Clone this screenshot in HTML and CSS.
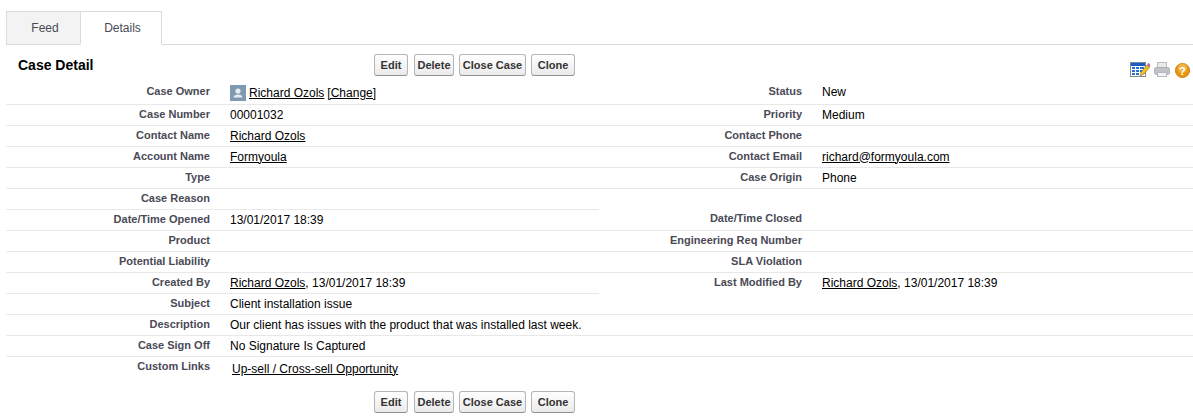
FILE: index.html
```html
<!DOCTYPE html>
<html lang="en">
<head>
<meta charset="utf-8">
<title>Case Detail</title>
<link rel="stylesheet" href="styles.css">
</head>
<body>
<div class="tabs">
  <div class="tab tab-feed">Feed</div>
  <div class="tab tab-active">Details</div>
</div>
<div class="head">
  <h2 class="title">Case Detail</h2>
  <div class="btns">
    <button class="btn">Edit</button><button class="btn">Delete</button><button class="btn">Close Case</button><button class="btn">Clone</button>
  </div>
  <div class="tools">
    <svg class="ico" width="20" height="16" viewBox="0 0 20 16"><rect x="0.5" y="0.5" width="15" height="14" fill="#fff" stroke="#7f8c98"/><rect x="1" y="1" width="14" height="3" fill="#1a5cc0"/><path d="M2 5h3v2H2zM6 5h3v2H6zM10 5h4v2h-4zM2 8h3v2H2zM6 8h3v2H6zM10 8h4v2h-4zM2 11h3v2H2zM6 11h3v2H6z" fill="#2a6fd6"/><path d="M10 14l1-4 6-7 3 2-6 7z" fill="#f2c21e" stroke="#7a5c10" stroke-width="0.5"/><path d="M17 3l1-2 2 1 0 3z" fill="#c862a8"/></svg>
    <svg class="ico" width="16" height="16" viewBox="0 0 16 16"><rect x="3.500" y="0.500" width="9" height="6" fill="#e8eaec" stroke="#b8bcc0"/><rect x="0.500" y="5.500" width="15" height="7" rx="2" fill="#bfc3c7" stroke="#acb0b4"/><rect x="3.500" y="10.500" width="9" height="4" fill="#f2f3f4" stroke="#b4b8bc"/></svg>
    <svg class="ico ico-help" width="15" height="15" viewBox="0 0 16 16"><circle cx="8" cy="8" r="7.500" fill="#e8960f" stroke="#c87a08"/><circle cx="8" cy="5.500" r="5" fill="#f2b040"/><text x="8" y="12.500" text-anchor="middle" class="qm">?</text></svg>
  </div>
</div>
<table class="detail">
  <colgroup><col class="c-l"><col class="c-v"><col class="c-l2"><col></colgroup>
  <tr class="first">
    <th>Case Owner</th>
    <td><span class="owner"><svg class="avatar" width="16" height="16" viewBox="0 0 16 16"><rect width="16" height="16" fill="#7f99b0"/><circle cx="8" cy="6" r="2.600" fill="#e6ebf0"/><path d="M3.500 12.500c0-2 2-3 4.500-3s4.500 1 4.500 3z" fill="#e6ebf0"/></svg><a href="#">Richard Ozols</a> <a class="change" href="#">[Change]</a></span></td>
    <th>Status</th><td>New</td>
  </tr>
  <tr><th>Case Number</th><td>00001032</td><th>Priority</th><td>Medium</td></tr>
  <tr><th>Contact Name</th><td><a href="#">Richard Ozols</a></td><th>Contact Phone</th><td></td></tr>
  <tr><th>Account Name</th><td><a href="#">Formyoula</a></td><th>Contact Email</th><td><a href="#">richard@formyoula.com</a></td></tr>
  <tr><th>Type</th><td></td><th>Case Origin</th><td>Phone</td></tr>
  <tr><th>Case Reason</th><td></td><th class="none"></th><td class="none"></td></tr>
  <tr><th>Date/Time Opened</th><td>13/01/2017 18:39</td><th>Date/Time Closed</th><td></td></tr>
  <tr><th>Product</th><td></td><th>Engineering Req Number</th><td></td></tr>
  <tr><th>Potential Liability</th><td></td><th>SLA Violation</th><td></td></tr>
  <tr><th>Created By</th><td><a href="#">Richard Ozols</a>, 13/01/2017 18:39</td><th class="none">Last Modified By</th><td class="none"><a href="#">Richard Ozols</a>, 13/01/2017 18:39</td></tr>
  <tr><th>Subject</th><td colspan="3">Client installation issue</td></tr>
  <tr><th>Description</th><td colspan="3">Our client has issues with the product that was installed last week.</td></tr>
  <tr><th>Case Sign Off</th><td colspan="3">No Signature Is Captured</td></tr>
  <tr class="links"><th>Custom Links</th><td colspan="3"><a href="#">Up-sell / Cross-sell Opportunity</a></td></tr>
</table>
<div class="foot">
  <button class="btn">Edit</button><button class="btn">Delete</button><button class="btn">Close Case</button><button class="btn">Clone</button>
</div>
</body>
</html>
```
FILE: styles.css
```css
* { box-sizing: border-box; }
html, body { margin: 0; padding: 0; background: #fff; }
body {
  width: 1193px;
  height: 418px;
  overflow: hidden;
  padding: 11px 0 0 6px;
  font-family: "Liberation Sans", Arial, sans-serif;
  font-size: 12px;
  color: #000;
}
.tabs {
  display: flex;
  height: 34px;
  border-bottom: 1px solid #dcdcdc;
}
.tab {
  height: 34px;
  line-height: 33px;
  padding-left: 3px;
  text-align: center;
  color: #4a4a56;
  border: 1px solid #dcdcdc;
}
.tab-feed { width: 74px; background: #f3f3f3; border-right: 0; }
.tab-active { width: 82px; background: #fff; border-bottom-color: #fff; }
.head {
  position: relative;
  height: 38px;
  display: flex;
  align-items: flex-start;
}
.title {
  margin: 12px 0 0 12px;
  font-size: 14px;
  line-height: 16px;
  font-weight: bold;
  width: 356px;
}
.btns { display: flex; gap: 5px; padding-top: 9px; }
.btn {
  height: 22px;
  padding: 0;
  margin: 0;
  white-space: nowrap;
  font-family: "Liberation Sans", Arial, sans-serif;
  font-size: 11px;
  font-weight: bold;
  color: #333;
  background: linear-gradient(#fff, #eaeaea);
  border: 1px solid #b5b5b5;
  border-bottom-color: #8f8f8f;
  border-radius: 3px;
}
.btn:nth-child(1) { width: 34px; margin-right: 1px; }
.btn:nth-child(2) { width: 40px; }
.btn:nth-child(3) { width: 67px; }
.btn:nth-child(4) { width: 44px; }
.tools {
  position: absolute;
  right: 3px;
  top: 17px;
  display: flex;
  gap: 4px;
  align-items: flex-start;
}
.ico { display: block; }
.ico-help { margin: 1px 0 0 1px; }
.qm { font: bold 12px "Liberation Sans", Arial, sans-serif; fill: #fff; }
.detail {
  width: 1187px;
  border-collapse: collapse;
  table-layout: fixed;
}
.c-l { width: 204px; }
.c-v { width: 389px; }
.c-l2 { width: 203px; }
.detail th, .detail td {
  height: 21px;
  padding: 3px 0 0;
  border-bottom: 1px solid #e8e8e8;
  vertical-align: top;
}
.detail th {
  padding-top: 2px;
  text-align: right;
  font-size: 11px;
  line-height: 14px;
  font-weight: bold;
  color: #4a4a56;
}
.detail td { padding-left: 20px; font-size: 12px; line-height: 15px; }
.detail .none { border-bottom: 0; }
.detail .first th { padding-top: 1px; }
.detail .first td { padding-top: 2px; }
.detail a { color: #000; text-decoration: underline; }
.owner { display: flex; align-items: center; }
.avatar { margin-right: 3px; }
.change { margin-left: 3px; }
.detail .links th, .detail .links td { border-bottom: 0; height: 24px; }
.detail .links td { padding-left: 22px; padding-top: 5px; }
.foot {
  display: flex;
  gap: 5px;
  padding: 11px 0 0 368px;
}
```
